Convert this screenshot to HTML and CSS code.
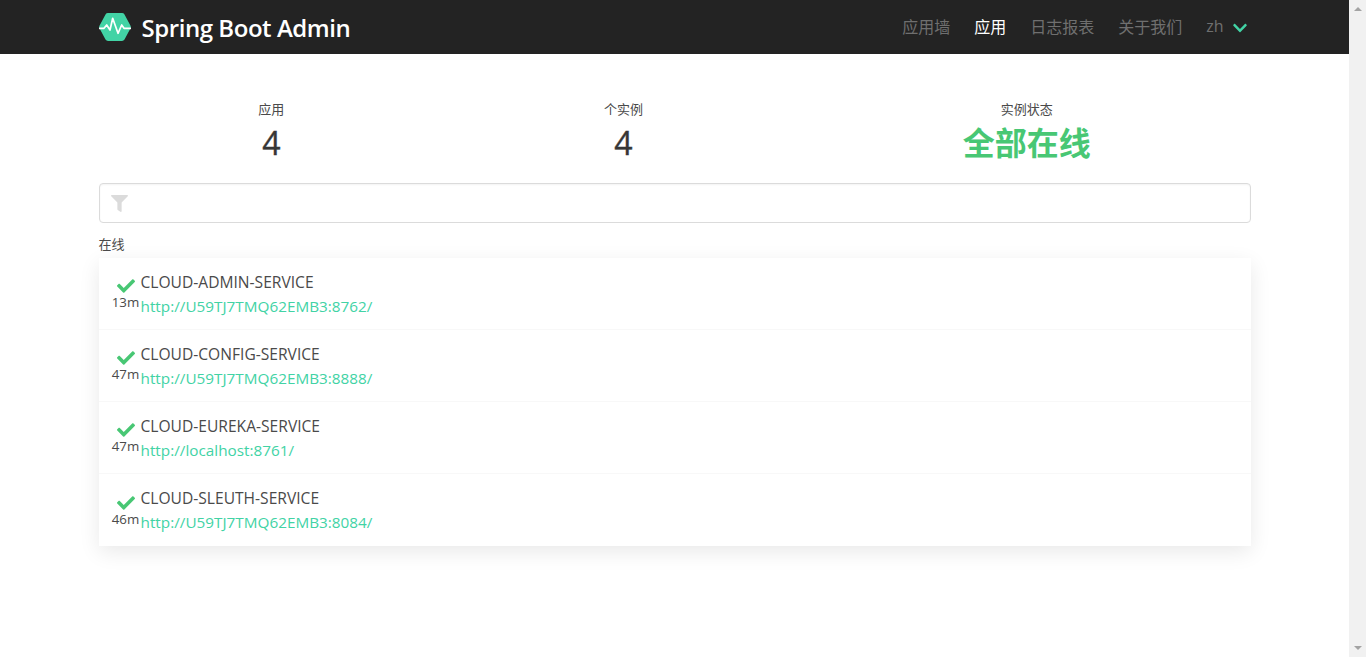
FILE: index.html
```html
<!DOCTYPE html>
<html lang="zh">
<head>
  <meta charset="UTF-8" />
  <title>Spring Boot Admin</title>
  <link rel="stylesheet" href="styles.css">
</head>
<body>
  <div class="page">
    <div class="main">
      <nav class="navbar">
        <div class="container navbar-inner">
          <a class="brand" href="#">
            <svg class="brand-logo" viewBox="0 0 32 28">
              <path d="M9 0h14a3 3 0 0 1 2.500 1.400L31.400 12.500a3 3 0 0 1 0 3L25.500 26.600a3 3 0 0 1-2.500 1.400H9a3 3 0 0 1-2.500-1.400L.6 15.500a3 3 0 0 1 0-3L6.500 1.400A3 3 0 0 1 9 0z" fill="#42d3a5"/>
              <path d="M0 15.300h5L7.700 12 11 17 13.700 5.300 19 20.300 22.700 12 25 15.300h7" fill="none" stroke="#fff" stroke-width="1.700" stroke-linejoin="round"/>
            </svg>
            <span class="brand-name">Spring Boot Admin</span>
          </a>
          <div class="nav-menu">
            <a class="nav-item" href="#">应用墙</a>
            <a class="nav-item active" href="#">应用</a>
            <a class="nav-item" href="#">日志报表</a>
            <a class="nav-item" href="#">关于我们</a>
            <a class="nav-item lang" href="#">zh
              <svg class="chevron" viewBox="0 0 448 512"><path d="M207.029 381.476L12.686 187.132c-9.373-9.373-9.373-24.569 0-33.941l22.667-22.667c9.357-9.357 24.522-9.375 33.901-.04L224 284.505l154.745-154.021c9.379-9.335 24.544-9.317 33.901.04l22.667 22.667c9.373 9.373 9.373 24.569 0 33.941L240.971 381.476c-9.373 9.372-24.569 9.372-33.942 0z"/></svg>
            </a>
          </div>
        </div>
      </nav>

      <section class="container content">
        <div class="level">
          <div class="level-item">
            <p class="heading">应用</p>
            <p class="title">4</p>
          </div>
          <div class="level-item">
            <p class="heading">个实例</p>
            <p class="title">4</p>
          </div>
          <div class="level-item">
            <p class="heading">实例状态</p>
            <p class="title is-up">全部在线</p>
          </div>
        </div>

        <div class="filter">
          <svg class="filter-icon" viewBox="0 0 512 512"><path d="M487.976 0H24.028C2.71 0-8.047 25.866 7.058 40.971L192 225.941V432c0 7.831 3.821 15.17 10.237 19.662l80 55.98C298.02 518.69 320 507.493 320 487.98V225.941l184.947-184.97C520.021 25.896 509.338 0 487.976 0z"/></svg>
        </div>

        <p class="group-label">在线</p>
        <div class="app-list">
          <div class="app-row">
            <div class="app-status">
              <svg class="check" viewBox="0 0 512 512"><path d="M173.898 439.404l-166.4-166.4c-9.997-9.997-9.997-26.206 0-36.204l36.203-36.204c9.997-9.998 26.207-9.998 36.204 0L192 312.69 432.095 72.596c9.997-9.997 26.207-9.997 36.204 0l36.203 36.204c9.997 9.997 9.997 26.206 0 36.204l-294.4 294.401c-9.998 9.997-26.207 9.997-36.204-.001z"/></svg>
              <span class="uptime">13m</span>
            </div>
            <div class="app-info">
              <span class="app-name">CLOUD-ADMIN-SERVICE</span>
              <a class="app-url" href="#">http://U59TJ7TMQ62EMB3:8762/</a>
            </div>
          </div>
          <div class="app-row">
            <div class="app-status">
              <svg class="check" viewBox="0 0 512 512"><path d="M173.898 439.404l-166.4-166.4c-9.997-9.997-9.997-26.206 0-36.204l36.203-36.204c9.997-9.998 26.207-9.998 36.204 0L192 312.69 432.095 72.596c9.997-9.997 26.207-9.997 36.204 0l36.203 36.204c9.997 9.997 9.997 26.206 0 36.204l-294.4 294.401c-9.998 9.997-26.207 9.997-36.204-.001z"/></svg>
              <span class="uptime">47m</span>
            </div>
            <div class="app-info">
              <span class="app-name">CLOUD-CONFIG-SERVICE</span>
              <a class="app-url" href="#">http://U59TJ7TMQ62EMB3:8888/</a>
            </div>
          </div>
          <div class="app-row">
            <div class="app-status">
              <svg class="check" viewBox="0 0 512 512"><path d="M173.898 439.404l-166.4-166.4c-9.997-9.997-9.997-26.206 0-36.204l36.203-36.204c9.997-9.998 26.207-9.998 36.204 0L192 312.69 432.095 72.596c9.997-9.997 26.207-9.997 36.204 0l36.203 36.204c9.997 9.997 9.997 26.206 0 36.204l-294.4 294.401c-9.998 9.997-26.207 9.997-36.204-.001z"/></svg>
              <span class="uptime">47m</span>
            </div>
            <div class="app-info">
              <span class="app-name">CLOUD-EUREKA-SERVICE</span>
              <a class="app-url" href="#">http://localhost:8761/</a>
            </div>
          </div>
          <div class="app-row">
            <div class="app-status">
              <svg class="check" viewBox="0 0 512 512"><path d="M173.898 439.404l-166.4-166.4c-9.997-9.997-9.997-26.206 0-36.204l36.203-36.204c9.997-9.998 26.207-9.998 36.204 0L192 312.69 432.095 72.596c9.997-9.997 26.207-9.997 36.204 0l36.203 36.204c9.997 9.997 9.997 26.206 0 36.204l-294.4 294.401c-9.998 9.997-26.207 9.997-36.204-.001z"/></svg>
              <span class="uptime">46m</span>
            </div>
            <div class="app-info">
              <span class="app-name">CLOUD-SLEUTH-SERVICE</span>
              <a class="app-url" href="#">http://U59TJ7TMQ62EMB3:8084/</a>
            </div>
          </div>
        </div>
      </section>
    </div>

    <div class="scrollbar">
      <span class="arrow-up"></span>
      <span class="arrow-down"></span>
    </div>
  </div>
</body>
</html>
```

FILE: styles.css
```css
* {
  margin: 0;
  padding: 0;
  box-sizing: border-box;
}

html, body {
  height: 100%;
  overflow: hidden;
}

body {
  background: #fff;
  color: #4a4a4a;
  font-family: "Open Sans", "Noto Sans CJK SC", sans-serif;
  font-size: 16px;
}

a {
  text-decoration: none;
}

.page {
  display: flex;
  height: 657px;
}

.main {
  flex: 1;
  min-width: 0;
}

.container {
  width: 1152px;
  margin: 0 auto;
}

/* navbar */
.navbar {
  height: 54px;
  background: #232323;
}

.navbar-inner {
  height: 100%;
  display: flex;
  align-items: center;
  justify-content: space-between;
}

.brand {
  display: flex;
  align-items: center;
  gap: 11px;
  color: #fff;
}

.brand-logo {
  width: 32px;
  height: 28px;
}

.brand-name {
  font-size: 24px;
  font-weight: 600;
  letter-spacing: -0.45px;
}

.nav-menu {
  display: flex;
  align-items: center;
  gap: 24px;
  padding-right: 4px;
  padding-bottom: 2px;
}

.nav-item {
  color: #6f6f6f;
  font-size: 16px;
}

.nav-item.active {
  color: #fff;
}

.lang {
  display: flex;
  align-items: center;
  gap: 9px;
}

.chevron {
  width: 14px;
  height: 16px;
  margin-top: 3px;
  fill: #42d3a5;
}

/* summary */
.content {
  padding-top: 46px;
}

.level {
  display: flex;
  justify-content: space-around;
  text-align: center;
}

.heading {
  font-size: 13px;
  line-height: 18px;
  margin-bottom: 5px;
  color: #4a4a4a;
}

.title {
  font-size: 32px;
  line-height: 40px;
  font-weight: 500;
  -webkit-text-stroke: 0.4px #363636;
  color: #363636;
}

.title.is-up {
  color: #48c774;
  font-weight: 700;
  -webkit-text-stroke: 0;
}

/* filter */
.filter {
  height: 40px;
  margin-top: 20px;
  padding-left: 11px;
  display: flex;
  align-items: center;
  border: 1px solid #dbdbdb;
  border-radius: 4px;
  box-shadow: inset 0 1px 2px rgba(10, 10, 10, 0.05);
}

.filter-icon {
  width: 17px;
  height: 17px;
  fill: #dbdbdb;
}

.group-label {
  margin-top: 12px;
  font-size: 13px;
  line-height: 18px;
  color: #4a4a4a;
}

/* application list */
.app-list {
  margin-top: 5px;
  background: #fff;
  box-shadow: 0 6px 20px rgba(10, 10, 10, 0.09);
}

.app-row {
  height: 72px;
  display: flex;
  align-items: center;
  padding-left: 13px;
  border-bottom: 1px solid #f8f8f8;
}

.app-row:last-child {
  border-bottom: 0;
}

.app-status {
  width: 29px;
  display: flex;
  flex-direction: column;
  align-items: center;
  padding-right: 1px;
  margin-top: -1px;
}

.check {
  width: 18px;
  height: 18px;
  margin-top: 1px;
  fill: #48c774;
}

.uptime {
  font-size: 13.300px;
  line-height: 15px;
  color: #4a4a4a;
}

.app-info {
  display: flex;
  flex-direction: column;
  line-height: 24px;
}

.app-name {
  font-size: 15.600px;
  color: #4a4a4a;
}

.app-url {
  font-size: 15.300px;
  color: #42d3a5;
}

/* the window's scrollbar, nothing to scroll here */
.scrollbar {
  width: 17px;
  background: #f1f1f1;
  display: flex;
  flex-direction: column;
  justify-content: space-between;
  align-items: center;
  padding: 7px 0;
}

.arrow-up {
  border-left: 4px solid transparent;
  border-right: 4px solid transparent;
  border-bottom: 4px solid #a3a3a3;
}

.arrow-down {
  border-left: 4px solid transparent;
  border-right: 4px solid transparent;
  border-top: 4px solid #a3a3a3;
}
```
